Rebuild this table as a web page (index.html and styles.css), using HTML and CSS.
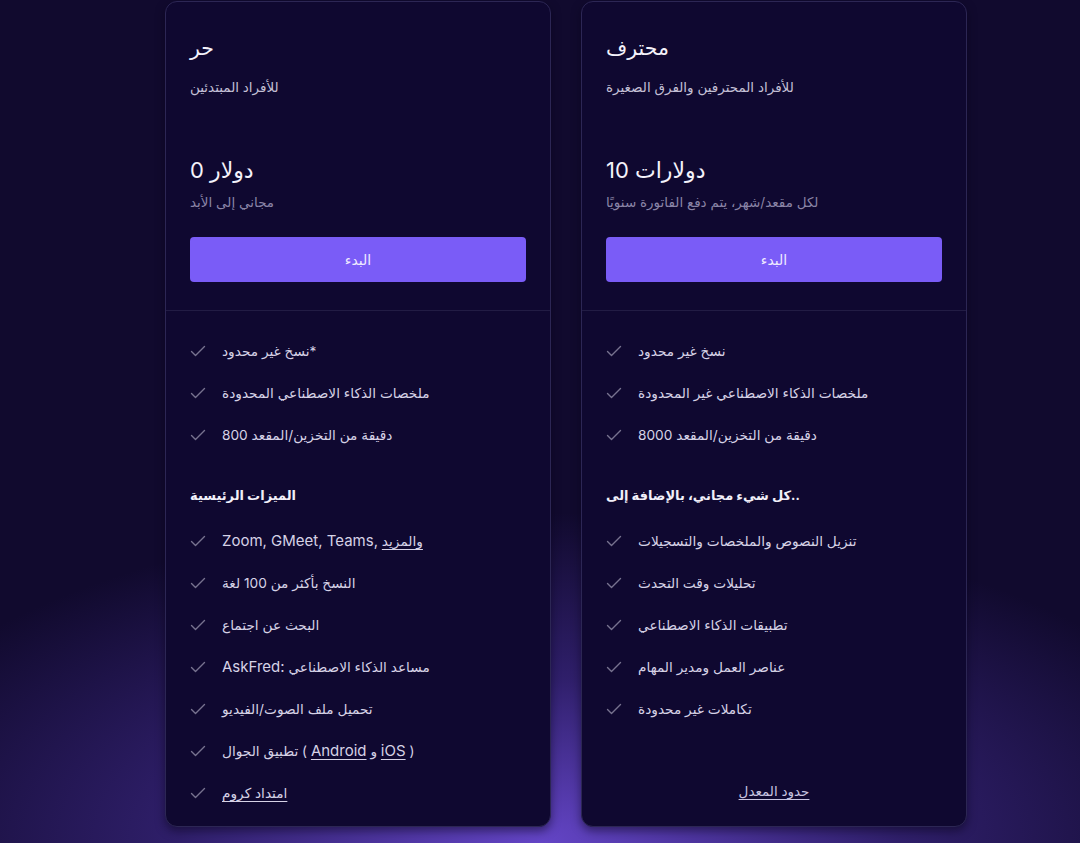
FILE: index.html
```html
<!DOCTYPE html>
<html lang="ar">
<head>
<meta charset="utf-8">
<title>الأسعار</title>
<link rel="stylesheet" href="styles.css">
</head>
<body>
<main class="page">
  <div class="plans">
    <section class="card">
      <div class="card-head">
        <h2 class="plan-name">حر</h2>
        <p class="plan-desc">للأفراد المبتدئين</p>
        <div class="price">دولار 0</div>
        <p class="price-note">مجاني إلى الأبد</p>
        <a class="cta" href="#">البدء</a>
      </div>
      <div class="card-body">
        <ul class="features">
          <li><svg class="check" viewBox="0 0 16 12"><path d="M1.5 6.5l4 4 9-9"/></svg><span>نسخ غير محدود*</span></li>
          <li><svg class="check" viewBox="0 0 16 12"><path d="M1.5 6.5l4 4 9-9"/></svg><span>ملخصات الذكاء الاصطناعي المحدودة</span></li>
          <li><svg class="check" viewBox="0 0 16 12"><path d="M1.5 6.5l4 4 9-9"/></svg><span>دقيقة من التخزين/المقعد 800</span></li>
        </ul>
        <h3 class="feat-heading">الميزات الرئيسية</h3>
        <ul class="features">
          <li><svg class="check" viewBox="0 0 16 12"><path d="M1.5 6.5l4 4 9-9"/></svg><span><span class="en">Zoom, GMeet, Teams,</span> <u>والمزيد</u></span></li>
          <li><svg class="check" viewBox="0 0 16 12"><path d="M1.5 6.5l4 4 9-9"/></svg><span>النسخ بأكثر من 100 لغة</span></li>
          <li><svg class="check" viewBox="0 0 16 12"><path d="M1.5 6.5l4 4 9-9"/></svg><span>البحث عن اجتماع</span></li>
          <li><svg class="check" viewBox="0 0 16 12"><path d="M1.5 6.5l4 4 9-9"/></svg><span><span class="en">AskFred:</span> مساعد الذكاء الاصطناعي</span></li>
          <li><svg class="check" viewBox="0 0 16 12"><path d="M1.5 6.5l4 4 9-9"/></svg><span>تحميل ملف الصوت/الفيديو</span></li>
          <li><svg class="check" viewBox="0 0 16 12"><path d="M1.5 6.5l4 4 9-9"/></svg><span>تطبيق الجوال ( <u class="en">Android</u> و <u class="en">iOS</u> )</span></li>
          <li><svg class="check" viewBox="0 0 16 12"><path d="M1.5 6.5l4 4 9-9"/></svg><span><u>امتداد كروم</u></span></li>
        </ul>
      </div>
    </section>

    <section class="card">
      <div class="card-head">
        <h2 class="plan-name">محترف</h2>
        <p class="plan-desc">للأفراد المحترفين والفرق الصغيرة</p>
        <div class="price">دولارات 10</div>
        <p class="price-note">لكل مقعد/شهر، يتم دفع الفاتورة سنويًا</p>
        <a class="cta" href="#">البدء</a>
      </div>
      <div class="card-body">
        <ul class="features">
          <li><svg class="check" viewBox="0 0 16 12"><path d="M1.5 6.5l4 4 9-9"/></svg><span>نسخ غير محدود</span></li>
          <li><svg class="check" viewBox="0 0 16 12"><path d="M1.5 6.5l4 4 9-9"/></svg><span>ملخصات الذكاء الاصطناعي غير المحدودة</span></li>
          <li><svg class="check" viewBox="0 0 16 12"><path d="M1.5 6.5l4 4 9-9"/></svg><span>دقيقة من التخزين/المقعد 8000</span></li>
        </ul>
        <h3 class="feat-heading">كل شيء مجاني، بالإضافة إلى..</h3>
        <ul class="features">
          <li><svg class="check" viewBox="0 0 16 12"><path d="M1.5 6.5l4 4 9-9"/></svg><span>تنزيل النصوص والملخصات والتسجيلات</span></li>
          <li><svg class="check" viewBox="0 0 16 12"><path d="M1.5 6.5l4 4 9-9"/></svg><span>تحليلات وقت التحدث</span></li>
          <li><svg class="check" viewBox="0 0 16 12"><path d="M1.5 6.5l4 4 9-9"/></svg><span>تطبيقات الذكاء الاصطناعي</span></li>
          <li><svg class="check" viewBox="0 0 16 12"><path d="M1.5 6.5l4 4 9-9"/></svg><span>عناصر العمل ومدير المهام</span></li>
          <li><svg class="check" viewBox="0 0 16 12"><path d="M1.5 6.5l4 4 9-9"/></svg><span>تكاملات غير محدودة</span></li>
        </ul>
        <a class="rate-link" href="#">حدود المعدل</a>
      </div>
    </section>
  </div>
</main>
</body>
</html>
```

FILE: styles.css
```css
* { box-sizing: border-box; }

html, body {
  margin: 0;
  height: 100%;
}

body {
  background-color: #110a2e;
  background-image:
    radial-gradient(ellipse 720px 330px at 50% 100%, rgba(104, 72, 206, 0.95), rgba(72, 48, 156, 0.55) 50%, rgba(17, 10, 46, 0) 100%);
  font-family: Inter, "DejaVu Sans", sans-serif;
  color: #d6d2e6;
  overflow: hidden;
}

.page {
  height: 843px;
}

.plans {
  display: grid;
  grid-template-columns: 386px 386px;
  column-gap: 30px;
  padding: 1px 0 0 165px;
}

.card {
  display: flex;
  flex-direction: column;
  height: 826px;
  background: #0f0830;
  border: 1px solid #2c2654;
  border-radius: 12px;
  overflow: hidden;
  box-shadow: 0 4px 10px rgba(8, 4, 24, 0.5);
}

.card-head {
  padding: 32px 24px 28px;
  border-bottom: 1px solid #221c44;
}

.plan-name {
  margin: 0;
  font-size: 20.5px;
  line-height: 28px;
  font-weight: 400;
  color: #f4f2fb;
}

.plan-desc {
  margin: 15px 0 0;
  font-size: 13.5px;
  line-height: 20px;
  color: #c4c0d6;
}

.price {
  margin-top: 58px;
  font-size: 22px;
  line-height: 30px;
  color: #f4f2fb;
}

.price-note {
  margin: 7px 0 0;
  font-size: 13.5px;
  line-height: 20px;
  color: #8a84a6;
}

.cta {
  display: block;
  margin-top: 25px;
  height: 45px;
  line-height: 45px;
  text-align: center;
  background: #7a5cf7;
  border-radius: 4px;
  color: #efeaff;
  font-size: 14px;
  text-decoration: none;
}

.card-body {
  flex: 1;
  display: flex;
  flex-direction: column;
  padding: 30px 24px 25px;
}

.features {
  list-style: none;
  margin: 0;
  padding: 0;
  display: flex;
  flex-direction: column;
  gap: 22px;
}

.features li {
  display: flex;
  align-items: center;
  gap: 16px;
  height: 20px;
  font-size: 13.7px;
  line-height: 20px;
  color: #d6d2e6;
}

.en {
  font-size: 15px;
}

.features u {
  text-underline-offset: 3px;
}

.check {
  width: 16px;
  height: 12px;
  flex: none;
  fill: none;
  stroke: #77728f;
  stroke-width: 1.4;
  stroke-linecap: round;
  stroke-linejoin: round;
}

.feat-heading {
  margin: 40px 0 26px;
  font-size: 13px;
  line-height: 20px;
  font-weight: 700;
  color: #f1eff9;
}

.rate-link {
  margin-top: auto;
  align-self: center;
  font-size: 13.5px;
  line-height: 20px;
  color: #c8c4e0;
  text-decoration: underline;
  text-underline-offset: 3px;
}
```
